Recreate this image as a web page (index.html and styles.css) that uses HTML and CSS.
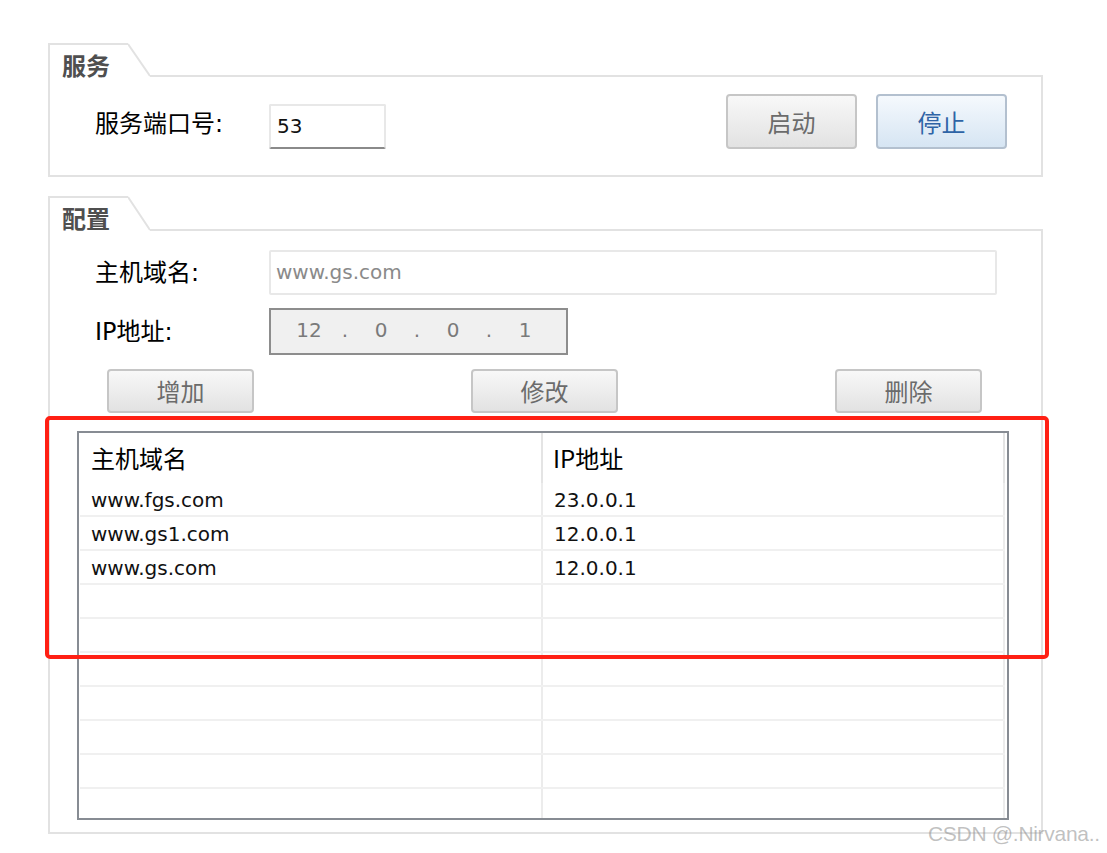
FILE: index.html
```html
<!DOCTYPE html>
<html lang="zh-CN">
<head>
<meta charset="utf-8">
<title>DNS 服务</title>
<link rel="stylesheet" href="styles.css">
</head>
<body>
<div class="page">
  <section class="group group-service">
    <div class="group-head">
      <div class="tab"><span class="tab-title">服务</span></div>
      <svg class="tab-slant" width="22" height="34" viewBox="0 0 22 34"><line x1="0" y1="1" x2="22" y2="33" stroke="#e2e2e2" stroke-width="2"/></svg>
      <div class="head-fill"></div>
    </div>
    <div class="group-body service-body">
      <span class="label">服务端口号:</span>
      <div class="input port">53</div>
      <div class="spacer"></div>
      <button class="btn btn-big">启动</button>
      <button class="btn btn-big btn-primary">停止</button>
    </div>
  </section>

  <section class="group group-config">
    <div class="group-head">
      <div class="tab"><span class="tab-title">配置</span></div>
      <svg class="tab-slant" width="22" height="35" viewBox="0 0 22 35"><line x1="0" y1="1" x2="22" y2="34" stroke="#e2e2e2" stroke-width="2"/></svg>
      <div class="head-fill"></div>
    </div>
    <div class="group-body config-body">
      <div class="form-row host-row">
        <span class="label">主机域名:</span>
        <div class="input host">www.gs.com</div>
      </div>
      <div class="form-row ip-row">
        <span class="label">IP地址:</span>
        <div class="ip-field">
          <span class="ip-seg">12</span><span class="ip-seg">.</span><span class="ip-seg">0</span><span class="ip-seg">.</span><span class="ip-seg">0</span><span class="ip-seg">.</span><span class="ip-seg">1</span>
        </div>
      </div>
      <div class="action-row">
        <button class="btn btn-small">增加</button>
        <button class="btn btn-small">修改</button>
        <button class="btn btn-small">删除</button>
      </div>
      <div class="table">
        <div class="t-row t-head">
          <div class="t-cell c1">主机域名</div>
          <div class="t-cell c2">IP地址</div>
        </div>
        <div class="t-row"><div class="t-cell c1">www.fgs.com</div><div class="t-cell c2">23.0.0.1</div></div>
        <div class="t-row"><div class="t-cell c1">www.gs1.com</div><div class="t-cell c2">12.0.0.1</div></div>
        <div class="t-row"><div class="t-cell c1">www.gs.com</div><div class="t-cell c2">12.0.0.1</div></div>
        <div class="t-row"><div class="t-cell c1"></div><div class="t-cell c2"></div></div>
        <div class="t-row"><div class="t-cell c1"></div><div class="t-cell c2"></div></div>
        <div class="t-row"><div class="t-cell c1"></div><div class="t-cell c2"></div></div>
        <div class="t-row"><div class="t-cell c1"></div><div class="t-cell c2"></div></div>
        <div class="t-row"><div class="t-cell c1"></div><div class="t-cell c2"></div></div>
        <div class="t-row"><div class="t-cell c1"></div><div class="t-cell c2"></div></div>
        <div class="t-row"><div class="t-cell c1"></div><div class="t-cell c2"></div></div>
      </div>
    </div>
  </section>

  <div class="highlight"></div>
  <div class="watermark">CSDN @.Nirvana..</div>
</div>
</body>
</html>
```
FILE: styles.css
```css
* { box-sizing: border-box; }
html, body { margin: 0; padding: 0; background: #ffffff; }
body {
  font-family: "DejaVu Sans", "Noto Sans CJK SC", sans-serif;
  color: #000;
}
.page {
  position: relative;
  width: 1107px;
  height: 853px;
  padding: 43px 0 0 48px;
  overflow: hidden;
}
.group { width: 995px; }
.group-config { margin-top: 19px; }

.group-head {
  display: flex;
  height: 34px;
}
.group-config .group-head { height: 35px; }
.tab {
  width: 80px;
  border-top: 2px solid #e2e2e2;
  border-left: 2px solid #e2e2e2;
  padding: 8px 0 0 12px;
}
.tab-title {
  display: block;
  font-family: "Noto Sans CJK SC", sans-serif;
  font-weight: 700;
  font-size: 24px;
  line-height: 24px;
  color: #4f4f4f;
  white-space: nowrap;
}
.tab-slant { display: block; flex: none; }
.head-fill {
  flex: 1;
  border-bottom: 2px solid #e2e2e2;
}
.group-body {
  border: 2px solid #e2e2e2;
  border-top: none;
}

.label {
  display: block;
  width: 174px;
  font-size: 24px;
  line-height: 24px;
  color: #000;
  white-space: nowrap;
}

.service-body {
  display: flex;
  align-items: flex-start;
  padding: 17px 34px 26px 45px;
}
.service-body .label { margin-top: 18px; }
.input {
  height: 45px;
  border: 2px solid #e8e8e8;
  border-radius: 2px;
  font-size: 20px;
  line-height: 41px;
  white-space: nowrap;
}
.port {
  width: 117px;
  margin-top: 10px;
  border-bottom-color: #8a8a8a;
  padding-left: 6px;
  color: #111;
}
.spacer { flex: 1; }

.btn {
  font-family: "Noto Sans CJK SC", sans-serif;
  font-size: 24px;
  line-height: 1;
  color: #6b6b6b;
  border: 2px solid #c6c6c6;
  border-radius: 4px;
  background: linear-gradient(#f8f8f8, #e2e2e2);
  padding: 0;
  margin: 0;
}
.btn-big { width: 131px; height: 55px; }
.btn-big + .btn-big { margin-left: 19px; }
.btn-primary {
  color: #2f64a6;
  border-color: #b3c0cf;
  background: linear-gradient(#f5f9fd, #d6e5f3);
}
.btn-small { width: 147px; height: 44px; }

.config-body {
  padding: 19px 32px 12px 0;
}
.form-row {
  display: flex;
  align-items: center;
  padding-left: 45px;
}
.host { width: 728px; color: #8a8a8a; padding-left: 5px; }
.ip-row { margin-top: 13px; }
.ip-field {
  display: flex;
  align-items: center;
  width: 299px;
  height: 47px;
  border: 2px solid #8d8d8d;
  background: #f0f0f0;
  padding-left: 20px;
  padding-bottom: 3px;
}
.ip-seg {
  width: 36px;
  text-align: center;
  font-size: 20px;
  color: #7a7a7a;
}

.action-row {
  display: flex;
  justify-content: space-between;
  margin-top: 14px;
  padding: 0 27px 0 57px;
}

.table {
  margin: 18px 0 0 27px;
  width: 932px;
  height: 389px;
  border: 2px solid #878c93;
  overflow: hidden;
}
.t-row {
  display: flex;
  height: 34px;
  border-bottom: 2px solid #f0f0f0;
  margin-right: 2px;
  margin-left: 1px;
}
.t-cell {
  font-size: 20px;
  line-height: 34px;
  color: #111;
  padding-left: 11px;
  border-right: 2px solid #ececec;
  white-space: nowrap;
  overflow: hidden;
}
.c1 { width: 463px; }
.c2 { width: 462px; }
.t-head {
  height: 50px;
  border-bottom: none;
  margin-left: 0;
}
.t-head .t-cell {
  font-family: "Noto Sans CJK SC", sans-serif;
  font-size: 24px;
  line-height: 50px;
  color: #000;
  padding-left: 12px;
  border-right-color: #e4e4e4;
}
.t-head .c1 { width: 464px; }
.t-head .c2 { width: 462px; padding-left: 10px; }

.highlight {
  position: absolute;
  left: 45px;
  top: 416px;
  width: 1004px;
  height: 243px;
  border: 4px solid #ff2014;
  border-radius: 5px;
  pointer-events: none;
}
.watermark {
  position: absolute;
  left: 928px;
  top: 823px;
  font-family: "Liberation Sans", Arial, sans-serif;
  font-size: 21px;
  line-height: 21px;
  letter-spacing: -0.3px;
  color: rgba(140, 140, 140, 0.55);
  white-space: nowrap;
}
```
